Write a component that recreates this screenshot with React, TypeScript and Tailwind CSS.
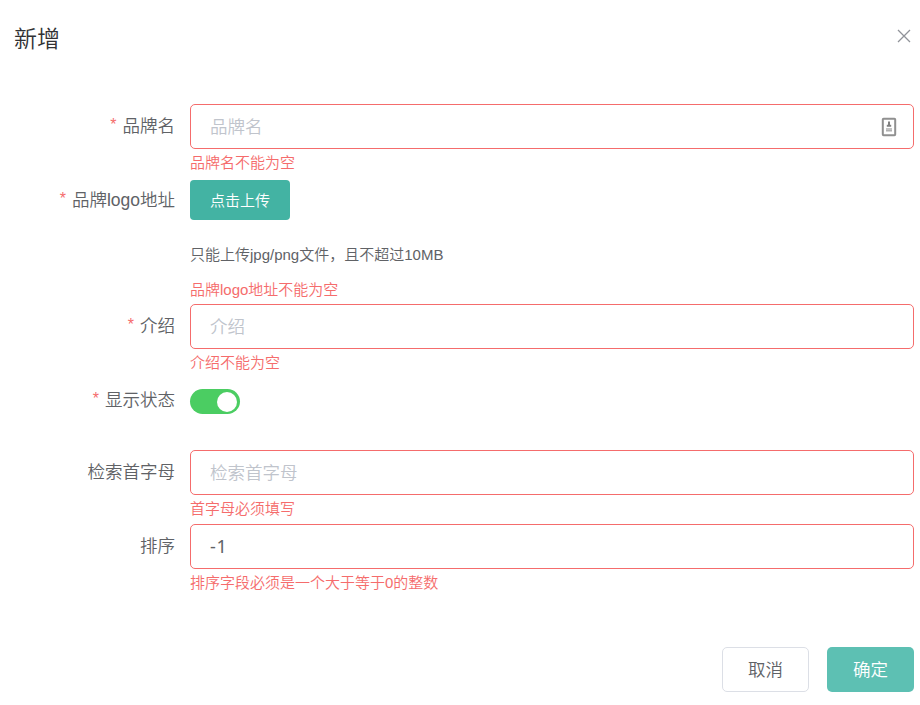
import type { ReactNode } from 'react';

interface FieldProps {
  label: string;
  required?: boolean;
  error?: string;
  height: string;
  children: ReactNode;
}

function Field({ label, required, error, height, children }: FieldProps) {
  return (
    <div className={`flex ${height}`}>
      <label className="flex h-[45px] w-[190px] shrink-0 items-center justify-end whitespace-pre pr-[15px] pb-px text-[17.5px] text-[#606266]">
        {required && <span className="mr-[6px] -mt-[2px] text-[16px] text-[#f56c6c]">*</span>}
        <span>{label}</span>
      </label>
      <div className="min-w-0 flex-1">
        {children}
        {error && <p className="pt-[5px] text-[15px] leading-[18px] text-[#f56c6c]">{error}</p>}
      </div>
    </div>
  );
}

const inputClass =
  'block h-[45px] w-full rounded-[5px] border border-[#f56c6c] bg-white px-[19px] text-[#606266] outline-none placeholder:text-[#c0c4cc] placeholder:opacity-100';
const textInputClass = `${inputClass} pt-px text-[17.5px]`;
const numberInputClass = `${inputClass} pb-px text-[18px] tracking-[0.8px] font-normal font-['Noto_Sans',sans-serif]`;

function AutofillIcon() {
  return (
    <svg className="absolute top-[13px] right-[17px]" width="16" height="20" viewBox="0 0 16 20" fill="none">
      <rect x="1.8" y="1.8" width="12.4" height="16.4" rx="0.8" stroke="#909090" strokeWidth="2" />
      <path d="M8 4.5v5M5.8 8.7h4.4" stroke="#808080" strokeWidth="2" />
      <path d="M5 12h6M5 13.8h6" stroke="#b0b0b0" strokeWidth="1.4" />
    </svg>
  );
}

export default function App() {
  return (
    <div className="h-[705px] w-[920px] overflow-hidden bg-white pr-[6px] font-['Liberation_Sans','Noto_Sans_CJK_SC',sans-serif] font-[350]">
      <header className="flex h-[104px] items-start justify-between pl-[14px]">
        <h1 className="mt-[24px] text-[23px] leading-[30px] text-[#303133]">新增</h1>
        <button aria-label="关闭" className="mt-[29px] mr-[3px]">
          <svg width="14" height="14" viewBox="0 0 14 14" stroke="#909399" strokeWidth="1.3" fill="none">
            <path d="M1 1l12 12M13 1L1 13" />
          </svg>
        </button>
      </header>
      <form>
        <Field label="品牌名" required error="品牌名不能为空" height="h-[74px]">
          <div className="relative">
            <input className={textInputClass} placeholder="品牌名" />
            <AutofillIcon />
          </div>
        </Field>
        <Field label="品牌logo地址" required height="h-[126px]">
          <button type="button" className="mt-[2px] block h-10 w-[100px] rounded-[4px] bg-[#43b3a3] pt-[2px] text-[15px] text-white">
            点击上传
          </button>
          <p className="mt-[25px] text-[15px] leading-5 text-[#606266]">只能上传jpg/png文件，且不超过10MB</p>
          <p className="mt-[15px] text-[15px] leading-5 text-[#f56c6c]">品牌logo地址不能为空</p>
        </Field>
        <Field label="介绍" required error="介绍不能为空" height="h-[74px]">
          <input className={textInputClass} placeholder="介绍" />
        </Field>
        <Field label="显示状态" required height="h-[72px]">
          <button type="button" role="switch" aria-checked="true" className="mt-[11px] flex h-[25px] w-[50px] items-center justify-end rounded-full bg-[#4bcd62] pr-[3px]">
            <span className="size-5 rounded-full bg-white" />
          </button>
        </Field>
        <Field label="检索首字母" error="首字母必须填写" height="h-[74px]">
          <input className={textInputClass} placeholder="检索首字母" />
        </Field>
        <Field label="排序" error="排序字段必须是一个大于等于0的整数" height="h-[123px]">
          <input className={numberInputClass} defaultValue="-1" />
        </Field>
      </form>
      <footer className="flex justify-end gap-[18px] text-[17.5px]">
        <button className="h-[45px] w-[87px] rounded-[5px] border border-[#dcdfe6] bg-white pt-px text-[#606266]">取消</button>
        <button className="h-[45px] w-[87px] rounded-[5px] bg-[#5dc0b3] pt-px text-white">确定</button>
      </footer>
    </div>
  );
}
